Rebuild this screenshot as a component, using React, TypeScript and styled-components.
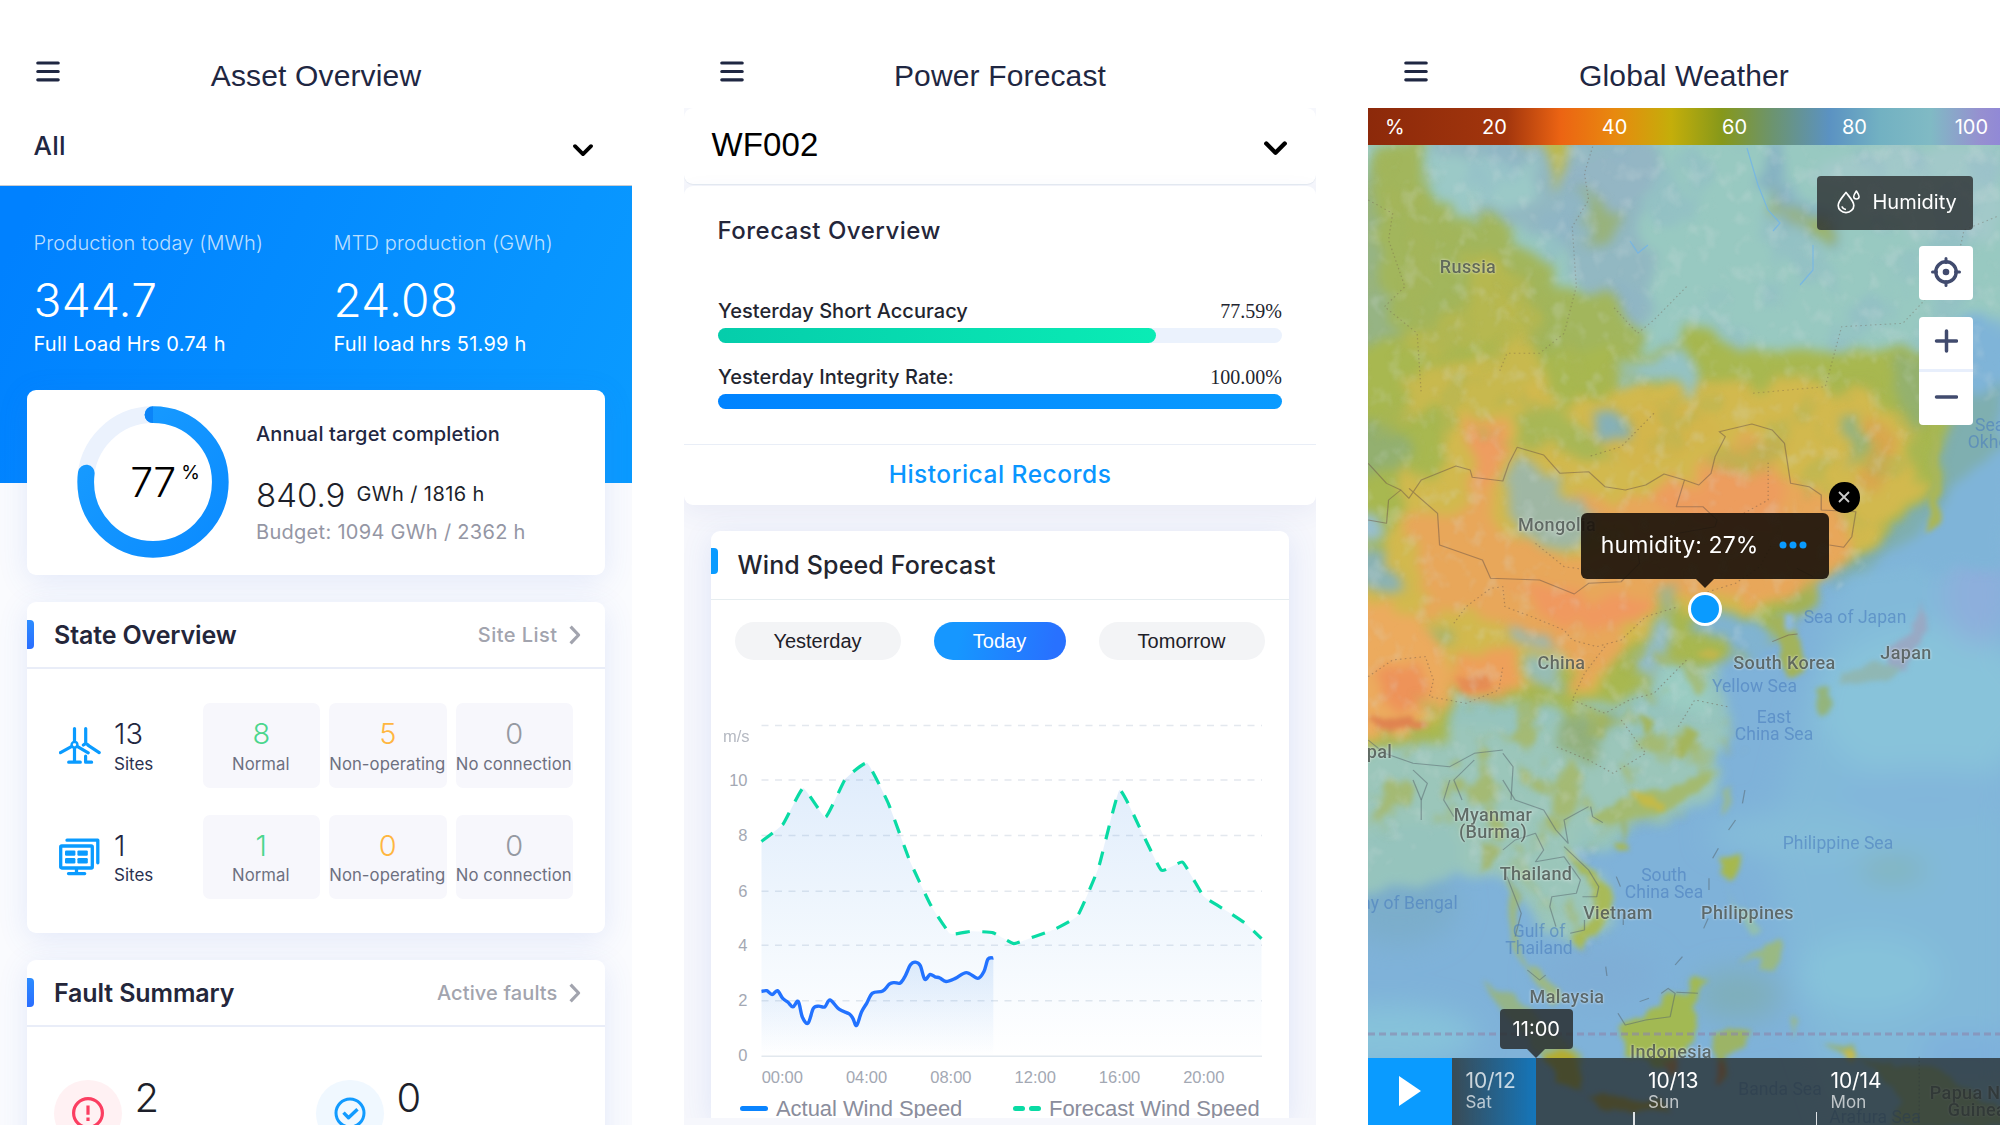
import React from 'react';
import styled, { createGlobalStyle } from 'styled-components';

const ui = `Inter, "Noto Sans", sans-serif`;
const helvetica = `"Liberation Sans", Arial, sans-serif`;

const GlobalStyle = createGlobalStyle`
  *, *::before, *::after { box-sizing: border-box; }
  body { margin: 0; background: #fff; font-family: ${ui}; overflow: hidden; }
  svg { display: block; flex: none; }
`;

/* ---------- shared ---------- */

const Page = styled.main`
  display: flex;
  gap: 52px;
  width: 2000px;
  height: 1125px;
  background: #fff;
`;

const Phone = styled.section`
  flex: none;
  display: flex;
  flex-direction: column;
  width: 632px;
  height: 1125px;
  overflow: hidden;
`;

const TopBar = styled.header`
  flex: none;
  display: grid;
  grid-template-columns: 60px 1fr 60px;
  height: 108px;
  padding: 58px 36px 0;
  background: #fff;
`;

const MenuIcon = styled.svg`
  margin-top: 2.5px;
`;

const TopTitle = styled.h1`
  margin: 0;
  font: 400 30px/36px ${helvetica};
  letter-spacing: 0.15px;
  text-align: center;
  color: #1f2742;
`;

const Header = ({ title }: { title: string }) => (
  <TopBar>
    <MenuIcon width="24" height="21" viewBox="0 0 24 21" stroke="#1f2742" strokeWidth="3.2" strokeLinecap="round">
      <path d="M1.8 2h20.4M1.8 10.5h20.4M1.8 18.8h20.4" />
    </MenuIcon>
    <TopTitle>{title}</TopTitle>
  </TopBar>
);

const DownChevron = ({ size = 20 }: { size?: number }) => (
  <svg width={size} height={size * 0.62} viewBox="0 0 20 12.4" fill="none" stroke="#000" strokeWidth="3.8" strokeLinecap="round" strokeLinejoin="round">
    <path d="M2 2.2l8 8 8-8" />
  </svg>
);

const Card = styled.article<{ $height?: number }>`
  flex: none;
  margin: 0 27px;
  ${(p) => (p.$height ? `height: ${p.$height}px;` : '')}
  border-radius: 9px;
  background: #fff;
  box-shadow: 0 6px 30px rgba(70, 110, 215, 0.13);
`;

/* ---------- asset overview ---------- */

const AssetBody = styled.div`
  flex: 1;
  display: flex;
  flex-direction: column;
  background: #fafbfe;
`;

const ScopeSelect = styled.div`
  flex: none;
  display: flex;
  align-items: center;
  justify-content: space-between;
  height: 77.5px;
  padding: 0 39px 1px 33.5px;
  border-bottom: 1px solid #c9ccd2;
  background: #fff;
  font-size: 26px;
  font-weight: 450;
  letter-spacing: 0.2px;
  color: #1f2742;

  svg { margin-top: 8px; }
`;

const Hero = styled.div`
  flex: none;
  display: grid;
  grid-template-columns: 300px 1fr;
  align-content: start;
  height: 297px;
  padding: 44px 33.5px 0;
  background: linear-gradient(115deg, #0081ff 5%, #0a9aff 95%);
  color: #fff;
`;

const HeroLabel = styled.div`
  font-size: 20px;
  font-weight: 320;
  line-height: 26px;
  letter-spacing: 0.15px;
  color: rgba(255, 255, 255, 0.74);
`;

const HeroValue = styled.div`
  margin-top: 16px;
  font-size: 46px;
  font-weight: 360;
  line-height: 56px;
  letter-spacing: 0.3px;
`;

const HeroNote = styled.div`
  margin-top: 3px;
  font-size: 20px;
  line-height: 26px;
  font-weight: 370;
  letter-spacing: 0.24px;
`;

const TargetCard = styled(Card)`
  display: flex;
  margin-top: -93px;
  padding: 16.5px 0 0 50px;
`;

const Ring = styled.div`
  position: relative;
  width: 152px;
  height: 152px;
`;

const RingValue = styled.div`
  position: absolute;
  inset: 0;
  display: flex;
  align-items: center;
  justify-content: center;
  gap: 6px;
  padding-left: 23.5px;
  font-size: 41px;
  font-weight: 320;
  letter-spacing: -0.8px;
  color: #000;

  sup {
    font-size: 19px;
    font-weight: 400;
    line-height: 20px;
    transform: translateY(-9.5px);
  }
`;

const TargetText = styled.div`
  margin: 14.5px 0 0 27px;
`;

const TargetTitle = styled.div`
  font-size: 20px;
  font-weight: 500;
  line-height: 26px;
  letter-spacing: 0.15px;
  color: #1f2742;
`;

const TargetValue = styled.div`
  display: flex;
  align-items: center;
  gap: 11px;
  height: 40px;
  margin-top: 28.5px;
  font-size: 33px;
  font-weight: 320;
  color: #1d1f2a;

  span {
    font-size: 20px;
    font-weight: 440;
    letter-spacing: 0.42px;
    transform: translateY(-1.5px);
  }
`;

const TargetBudget = styled.div`
  margin-top: 3.5px;
  font-size: 20px;
  font-weight: 370;
  line-height: 26px;
  letter-spacing: 0.3px;
  color: #9496a4;
`;

const CardHead = styled.header`
  display: flex;
  align-items: center;
  height: 67px;
  padding-right: 24px;
  border-bottom: 2px solid #e9edf8;
`;

const Accent = styled.i`
  width: 7px;
  height: 28.5px;
  border-radius: 0 4px 4px 0;
  background: linear-gradient(#2c8cff, #2a6dff);
`;

const CardTitle = styled.h2`
  margin: 0 auto 0 20px;
  font-size: 25px;
  font-weight: 620;
  letter-spacing: -0.12px;
  color: #24263a;
`;

const CardLink = styled.a<{ $spacing?: number }>`
  margin-right: 11.5px;
  font-size: 20px;
  font-weight: 450;
  letter-spacing: ${(p) => p.$spacing ?? 0}px;
  color: #a2a4ae;
`;

const RightChevron = () => (
  <svg width="12" height="20" viewBox="0 0 12 20" fill="none" stroke="#a2a4ae" strokeWidth="3.2" strokeLinejoin="round">
    <path d="M1.6 1.6L9.6 10l-8 8.4" />
  </svg>
);

const StateCard = styled(Card)`
  margin-top: 27px;
`;

const StateRow = styled.div`
  display: grid;
  grid-template-columns: 55px 88.5px 370.5px;
  align-items: center;
  height: 84.5px;
  padding-left: 32px;
  margin-top: 27px;

  &:nth-child(2) { margin-top: 34px; }
`;

const Stat = styled.div<{ $tone?: string; $tile?: boolean }>`
  height: 84.5px;
  padding-top: 14px;
  border-radius: 7px;
  background: ${(p) => (p.$tile ? '#f7f7fc' : 'none')};
  text-align: ${(p) => (p.$tile ? 'center' : 'left')};
  white-space: nowrap;

  strong {
    display: block;
    font-size: 29px;
    font-weight: 330;
    line-height: 34px;
    color: ${(p) => p.$tone ?? '#1f2742'};
  }
  span {
    display: block;
    margin: 2.5px -4px 0 ${(p) => (p.$tile ? '-5px' : '0')};
    font-size: ${(p) => (p.$tile ? 16.7 : 17)}px;
    font-weight: ${(p) => (p.$tile ? 370 : 400)};
    line-height: 20px;
    letter-spacing: ${(p) => (p.$tile ? 0.05 : 0)}px;
    color: ${(p) => (p.$tile ? '#6d7080' : '#2a3150')};
  }
`;

const Tiles = styled.div`
  display: grid;
  grid-template-columns: repeat(3, 117.5px);
  gap: 9px;
`;

const WindIcon = () => (
  <svg width="42" height="37" viewBox="0 0 42 37" fill="none" stroke="#0a9bff" strokeWidth="3.2" strokeLinecap="round" strokeLinejoin="round">
    <path d="M15.5 1.6v13M26.7 1.6v14M15.5 21v13.5M9.7 35.2h11.6M12.8 19.3L1.5 25.6M18.2 19.3l11 6.5M24.4 18l2.3-1.6 2.6 1.6M29.2 18.4l11 7.2M26.6 29.2v6h6" />
    <circle cx="15.5" cy="17.8" r="2.9" strokeWidth="2.4" />
  </svg>
);

const SolarIcon = () => (
  <svg width="42" height="38" viewBox="0 0 42 38" fill="none" stroke="#0a9bff" strokeWidth="3.3" strokeLinecap="round" strokeLinejoin="round">
    <path d="M8 2.2h30.8v22.6" />
    <rect x="1.7" y="8" width="31.6" height="22" rx="1" />
    <path d="M17.5 31v4.6M9.5 35.6h16.2" />
    <g fill="#0a9bff" stroke="none">
      <rect x="6" y="12.4" width="10.4" height="5.4" rx="1.2" />
      <rect x="18.4" y="12.4" width="10.4" height="5.4" rx="1.2" />
      <rect x="6" y="20" width="10.4" height="5.4" rx="1.2" />
      <rect x="18.4" y="20" width="10.4" height="5.4" rx="1.2" />
    </g>
  </svg>
);

const FaultRow = styled.div`
  display: grid;
  grid-template-columns: 262px 262px;
  padding: 47px 0 0 27px;
`;

const Fault = styled.div`
  display: flex;
  gap: 13px;
  font-size: 40px;
  font-weight: 320;
  line-height: 48px;
  color: #1d1f2a;
`;

const FaultBadge = styled.div<{ $bg: string }>`
  display: grid;
  place-items: center;
  width: 67.5px;
  height: 67.5px;
  margin-top: 5.5px;
  border-radius: 50%;
  background: ${(p) => p.$bg};
`;

const siteStates = [
  { icon: <WindIcon />, total: 13, counts: [8, 5, 0] },
  { icon: <SolarIcon />, total: 1, counts: [1, 0, 0] },
];
const stateKinds = [
  { label: 'Normal', tone: '#4bd68d' },
  { label: 'Non-operating', tone: '#ffb640' },
  { label: 'No connection', tone: '#9599a2' },
];

const AssetOverview = () => {
  const length = 2 * Math.PI * 67.3;
  return (
    <Phone>
      <Header title="Asset Overview" />
      <AssetBody>
        <ScopeSelect>
          All
          <DownChevron />
        </ScopeSelect>
        <Hero>
          <div>
            <HeroLabel>Production today (MWh)</HeroLabel>
            <HeroValue>344.7</HeroValue>
            <HeroNote>Full Load Hrs 0.74 h</HeroNote>
          </div>
          <div>
            <HeroLabel>MTD production (GWh)</HeroLabel>
            <HeroValue>24.08</HeroValue>
            <HeroNote>Full load hrs 51.99 h</HeroNote>
          </div>
        </Hero>
        <TargetCard $height={185.5}>
          <Ring>
            <svg width="152" height="152" viewBox="0 0 152 152" fill="none" strokeWidth="16.7">
              <defs>
                <linearGradient id="ring" x1="0" y1="1" x2="1" y2="0">
                  <stop offset="0" stopColor="#0b8bff" />
                  <stop offset="1" stopColor="#199dff" />
                </linearGradient>
              </defs>
              <circle cx="76" cy="76" r="67.3" stroke="#ebf2fd" />
              <circle
                cx="76" cy="76" r="67.3" stroke="url(#ring)" strokeLinecap="round"
                strokeDasharray={`${length * 0.77} ${length}`} transform="rotate(-90 76 76)"
              />
              <path d="M76 .4a8.3 8.3 0 0 0 0 16.7z" fill="#0b84f8" />
            </svg>
            <RingValue>77<sup>%</sup></RingValue>
          </Ring>
          <TargetText>
            <TargetTitle>Annual target completion</TargetTitle>
            <TargetValue>840.9 <span>GWh / 1816 h</span></TargetValue>
            <TargetBudget>Budget: 1094 GWh / 2362 h</TargetBudget>
          </TargetText>
        </TargetCard>
        <StateCard $height={331}>
          <CardHead>
            <Accent />
            <CardTitle>State Overview</CardTitle>
            <CardLink $spacing={0.45}>Site List</CardLink>
            <RightChevron />
          </CardHead>
          {siteStates.map((site, i) => (
            <StateRow key={i}>
              {site.icon}
              <Stat><strong>{site.total}</strong><span>Sites</span></Stat>
              <Tiles>
                {stateKinds.map((kind, k) => (
                  <Stat $tile $tone={kind.tone} key={kind.label}>
                    <strong>{site.counts[k]}</strong>
                    <span>{kind.label}</span>
                  </Stat>
                ))}
              </Tiles>
            </StateRow>
          ))}
        </StateCard>
        <StateCard $height={300}>
          <CardHead>
            <Accent />
            <CardTitle>Fault Summary</CardTitle>
            <CardLink $spacing={0.12}>Active faults</CardLink>
            <RightChevron />
          </CardHead>
          <FaultRow>
            <Fault>
              <FaultBadge $bg="#fff1f3">
                <svg width="34" height="34" viewBox="0 0 34 34" fill="none" stroke="#fb3e61" strokeWidth="3.2">
                  <circle cx="17" cy="17" r="14.4" />
                  <path d="M17 9.4v9.4M17 21.6v3.4" />
                </svg>
              </FaultBadge>
              2
            </Fault>
            <Fault>
              <FaultBadge $bg="#f0f8ff">
                <svg width="34" height="34" viewBox="0 0 34 34" fill="none" stroke="#129bff" strokeWidth="3">
                  <circle cx="17" cy="17" r="14" />
                  <path d="M10.5 16.6l5 5.2 9-8.6" strokeLinejoin="round" strokeWidth="3.4" />
                </svg>
              </FaultBadge>
              0
            </Fault>
          </FaultRow>
        </StateCard>
      </AssetBody>
    </Phone>
  );
};

/* ---------- power forecast ---------- */

const ForecastBody = styled.div`
  flex: 1;
  display: flex;
  flex-direction: column;
  background: #f6f7fc;
`;

const FarmSelect = styled.div`
  flex: none;
  display: flex;
  align-items: center;
  justify-content: space-between;
  height: 76px;
  padding: 0 29px 2px 27.5px;
  border-radius: 9px;
  background: #fff;
  box-shadow: 0 1px 1px #e3e8f0;
  font: 400 33px ${helvetica};
  letter-spacing: 0.1px;
  color: #000;

  svg { margin-top: 7px; }
`;

const OverviewCard = styled.article`
  flex: none;
  height: 318.5px;
  margin-top: 2px;
  padding-top: 30px;
  border-radius: 9px;
  background: #fff;
  box-shadow: 0 8px 24px rgba(70, 80, 170, 0.07);
`;

const OverviewTitle = styled.h2`
  margin: 0 33.5px 31.5px;
  font-size: 24px;
  font-weight: 500;
  line-height: 30px;
  letter-spacing: 0.5px;
  color: #24263a;
`;

const Meter = styled.div`
  padding: 20.8px 34px 0;
`;

const MeterText = styled.div`
  display: flex;
  justify-content: space-between;
  font-size: 20px;
  font-weight: 450;
  line-height: 26px;
  letter-spacing: 0.05px;
  color: #23252f;

  span {
    font: 400 20px/26px "Liberation Serif", serif;
    letter-spacing: 0;
  }
`;

const Track = styled.div`
  height: 15px;
  margin-top: 4px;
  border-radius: 8px;
  background: #ebf2fd;
`;

const Fill = styled.div<{ $colors: string }>`
  height: 100%;
  border-radius: 8px;
  background: linear-gradient(90deg, ${(p) => p.$colors});
`;

const HistoryLink = styled.a`
  display: block;
  height: 60px;
  margin-top: 34.5px;
  border-top: 1.5px solid #e9eef7;
  font-size: 24.5px;
  font-weight: 500;
  line-height: 58px;
  letter-spacing: 0.5px;
  text-align: center;
  color: #0a96ff;
`;

const WindCard = styled(Card)`
  margin-top: 26.5px;
  border-radius: 9px 9px 0 0;
  clip-path: inset(-40px -40px 0 -40px);
`;

const WindHead = styled.header`
  display: flex;
  align-items: center;
  height: 69px;
  border-bottom: 1.5px solid #e6edf0;

  i {
    width: 7px;
    height: 25.5px;
    margin-bottom: 8px;
    border-radius: 0 4px 4px 0;
    background: #0a9bff;
  }
  h2 {
    margin: 0 0 1px 19.5px;
    font-size: 25px;
    font-weight: 500;
    letter-spacing: 0.15px;
    color: #23252f;
  }
`;

const DayTabs = styled.div`
  display: flex;
  gap: 33px;
  padding: 22px 0 0 23.5px;
`;

const DayTab = styled.button<{ $active?: boolean }>`
  width: ${(p) => (p.$active ? 132 : 166)}px;
  height: 37.5px;
  padding: 1px 0 0;
  border: 0;
  border-radius: 19px;
  background: ${(p) => (p.$active ? 'linear-gradient(100deg, #1697ff 20%, #2871ff 90%)' : '#f3f4f6')};
  font: 400 20px ${helvetica};
  color: ${(p) => (p.$active ? '#fff' : '#1e2028')};
`;

const Legend = styled.div`
  display: flex;
  align-items: center;
  height: 26px;
  padding-left: 29px;
  font: 400 22px/26px ${helvetica};
  white-space: nowrap;
  color: #8a8d9c;

  svg { margin-right: 8px; }
  span { width: 237px; letter-spacing: -0.05px; }
`;

const AxisText = styled.text`
  font: 400 16.5px ${helvetica};
  fill: #a3a8b3;
`;

type Pt = [number, number];

/* Samples on a plot grid where 51.6 units are one hour and 71.6 units are 1 m/s. */
const forecast: Pt[] = [
  [0, 557], [53, 602], [102, 695], [157, 620], [205, 718], [259, 760], [311, 655], [362, 510], [413, 395],
  [462, 318], [515, 324], [568, 320], [618, 292], [668, 310], [720, 330], [775, 365], [826, 490], [877, 690],
  [930, 585], [980, 482], [1032, 503], [1083, 415], [1135, 380], [1185, 345], [1225, 305],
];
const actual: Pt[] = [
  [0, 168], [13, 170], [26, 160], [39, 170], [52, 150], [65, 140], [77, 128], [90, 142], [100, 102], [114, 86],
  [127, 124], [140, 130], [155, 128], [168, 146], [190, 122], [215, 110], [224, 98], [233, 80], [245, 115],
  [258, 138], [272, 164], [297, 169], [313, 187], [325, 191], [340, 190], [352, 208], [365, 237], [377, 244],
  [389, 235], [400, 200], [413, 212], [425, 206], [437, 203], [452, 194], [475, 202], [502, 217], [530, 202],
  [545, 220], [555, 252], [568, 255],
];
const toPlot = ([x, y]: Pt): Pt => [50.5 + x / 2.45, 396.3 - y / 2.592];

const curve = (data: Pt[], tension: number) => {
  const p = data.map(toPlot);
  return p.reduce((d, pt, i) => {
    if (i === 0) return `M${pt[0]} ${pt[1]}`;
    const a = p[i - 2] ?? p[i - 1];
    const b = p[i - 1];
    const n = p[i + 1] ?? pt;
    return `${d}C${b[0] + (pt[0] - a[0]) * tension} ${b[1] + (pt[1] - a[1]) * tension} ${pt[0] - (n[0] - b[0]) * tension} ${pt[1] - (n[1] - b[1]) * tension} ${pt[0]} ${pt[1]}`;
  }, '');
};
const area = (data: Pt[], tension: number) =>
  `${curve(data, tension)}L${toPlot(data[data.length - 1])[0]} 396.3L50.5 396.3Z`;

const rows = [
  { y: 65.6, text: '' }, { y: 120, text: '10' }, { y: 175.6, text: '8' }, { y: 231.2, text: '6' },
  { y: 285.2, text: '4' }, { y: 340.7, text: '2' },
];
const hours = ['00:00', '04:00', '08:00', '12:00', '16:00', '20:00'];

const WindChart = () => (
  <svg width="578" height="436" viewBox="0 0 578 436">
    <defs>
      <linearGradient id="forecastArea" gradientUnits="userSpaceOnUse" x1="0" y1="105" x2="0" y2="396">
        <stop offset="0" stopColor="#2a7fe8" stopOpacity=".15" />
        <stop offset="1" stopColor="#2a8fe8" stopOpacity="0" />
      </linearGradient>
      <linearGradient id="actualArea" gradientUnits="userSpaceOnUse" x1="0" y1="295" x2="0" y2="396">
        <stop offset="0" stopColor="#2a7fe8" stopOpacity=".14" />
        <stop offset="1" stopColor="#2a7fe8" stopOpacity="0" />
      </linearGradient>
    </defs>
    {rows.map((r) => (
      <g key={r.y}>
        <path d={`M50.5 ${r.y}H551`} stroke="#e3e8ee" strokeWidth="1.5" strokeDasharray="7 6.5" />
        <AxisText x="36.5" y={r.y + 5.5} textAnchor="end">{r.text}</AxisText>
      </g>
    ))}
    <path d="M50.5 396.3H551" stroke="#e2e8ee" strokeWidth="1.5" />
    <AxisText x="36.5" y="401" textAnchor="end">0</AxisText>
    <AxisText x="38.5" y="82" textAnchor="end" opacity=".8">m/s</AxisText>
    {hours.map((h, i) => (
      <AxisText key={h} x={71.3 + i * 84.3} y="423" textAnchor="middle">{h}</AxisText>
    ))}
    <path d={area(forecast, 0.06)} fill="url(#forecastArea)" />
    <path d={area(actual, 0.17)} fill="url(#actualArea)" />
    <path d={curve(forecast, 0.06)} fill="none" stroke="#09dba4" strokeWidth="3.2" strokeDasharray="14 12.6" />
    <path d={curve(actual, 0.17)} fill="none" stroke="#2272ff" strokeWidth="3.4" strokeLinejoin="round" />
  </svg>
);

const PowerForecast = () => (
  <Phone>
    <Header title="Power Forecast" />
    <ForecastBody>
      <FarmSelect>
        WF002
        <DownChevron size={23} />
      </FarmSelect>
      <OverviewCard>
        <OverviewTitle>Forecast Overview</OverviewTitle>
        <Meter>
          <MeterText>Yesterday Short Accuracy<span>77.59%</span></MeterText>
          <Track><Fill $colors="#05cdab, #0aecb5" style={{ width: '77.59%' }} /></Track>
        </Meter>
        <Meter>
          <MeterText>Yesterday Integrity Rate:<span>100.00%</span></MeterText>
          <Track><Fill $colors="#0083ff, #0a9bff" style={{ width: '100%' }} /></Track>
        </Meter>
        <HistoryLink>Historical Records</HistoryLink>
      </OverviewCard>
      <WindCard $height={587}>
        <WindHead>
          <i />
          <h2>Wind Speed Forecast</h2>
        </WindHead>
        <DayTabs>
          <DayTab>Yesterday</DayTab>
          <DayTab $active>Today</DayTab>
          <DayTab>Tomorrow</DayTab>
        </DayTabs>
        <WindChart />
        <Legend>
          <svg width="28" height="5" viewBox="0 0 28 5"><rect width="28" height="5" rx="2.5" fill="#0a84ff" /></svg>
          <span>Actual Wind Speed</span>
          <svg width="28" height="5" viewBox="0 0 28 5" fill="#09dba4">
            <rect width="12" height="5" rx="2.5" /><rect x="16" width="12" height="5" rx="2.5" />
          </svg>
          <span>Forecast Wind Speed</span>
        </Legend>
      </WindCard>
    </ForecastBody>
  </Phone>
);

/* ---------- global weather ---------- */

const ScaleBar = styled.div`
  flex: none;
  display: grid;
  grid-template-columns: 66.5px repeat(4, 120px) 85.5px;
  align-items: center;
  justify-items: center;
  height: 37px;
  background: linear-gradient(90deg, #8c290a 0, #a3360d 22%, #ec6413 30.5%, #e8890f 39%, #c4ae0a 48%, #86981a 56%,
    #6c946f 64%, #5b92c2 73%, #72b1c2 81%, #80bac4 89%, #968fd0 97%, #9189d6 100%);
  font-size: 20px;
  color: #fff;

  span:first-child { justify-self: start; margin-left: 17px; }
  span:last-child { justify-self: end; margin-right: 12px; }
`;

const MapArea = styled.div`
  position: relative;
  flex: 1;
  overflow: hidden;
`;

const MapSvg = styled.svg`
  position: absolute;
  inset: 0;
`;

const Place = styled.div<{ $x: number; $y: number; $sea?: boolean }>`
  position: absolute;
  left: ${(p) => p.$x}px;
  top: ${(p) => p.$y - (p.$sea ? 0 : 1)}px;
  transform: translate(-50%, -50%);
  font: ${(p) => (p.$sea ? 400 : 500)} ${(p) => (p.$sea ? 17.5 : 18)}px/17px Roboto, sans-serif;
  letter-spacing: ${(p) => (p.$sea ? 0.05 : 0.35)}px;
  white-space: pre;
  text-align: center;
  color: ${(p) => (p.$sea ? 'rgba(74, 125, 190, .6)' : 'rgba(58, 66, 62, .74)')};
  text-shadow: ${(p) => (p.$sea ? 'none' : '0 0 3px rgba(255,255,255,.5), 0 0 2px rgba(255,255,255,.4)')};
`;

const LayerButton = styled.button`
  position: absolute;
  top: 30.5px;
  right: 27px;
  display: flex;
  align-items: center;
  gap: 12.5px;
  width: 156px;
  height: 54px;
  padding: 0 0 1px 20px;
  border: 0;
  border-radius: 4px;
  background: rgba(42, 46, 48, 0.8);
  font: 430 20px ${ui};
  color: #fff;
`;

const ToolStack = styled.div`
  position: absolute;
  top: 101px;
  right: 27px;
  display: flex;
  flex-direction: column;
  gap: 17px;
`;

const ToolGroup = styled.div`
  display: grid;
  width: 54px;
  border-radius: 4px;
  background: #fff;
  overflow: hidden;
`;

const Tool = styled.button`
  display: grid;
  place-items: center;
  height: 54px;
  padding: 0 0 3px;
  border: 0;
  background: none;

  &:first-child:not(:last-child) { height: 51.5px; }
  & + & { height: 56.5px; border-top: 3px solid #e8effc; }
`;

const Popup = styled.div`
  position: absolute;
  left: 212.8px;
  top: 367.7px;
  display: flex;
  align-items: center;
  gap: 20.5px;
  width: 248px;
  height: 66px;
  padding: 0 0 2px 20px;
  border-radius: 6px;
  background: rgba(26, 18, 10, 0.9);
  font-size: 23px;
  font-weight: 370;
  letter-spacing: 0.12px;
  color: #fff;

  &::after {
    content: '';
    position: absolute;
    top: 66px;
    left: 115px;
    border: 9px solid transparent;
    border-top-color: rgba(26, 18, 10, 0.9);
    border-bottom: 0;
  }
`;

const ClosePin = styled.button`
  position: absolute;
  left: 461px;
  top: 337px;
  display: grid;
  place-items: center;
  width: 30.5px;
  height: 30.5px;
  padding: 0;
  border: 0;
  border-radius: 50%;
  background: #000;
`;

const Marker = styled.div`
  position: absolute;
  left: 320px;
  top: 447px;
  width: 34px;
  height: 34px;
  border: 3.5px solid #fff;
  border-radius: 50%;
  background: #0a9bff;
`;

const TimeTip = styled.div`
  position: absolute;
  left: 131.5px;
  top: 864px;
  width: 73.5px;
  height: 40px;
  border-radius: 4px;
  background: rgba(42, 48, 50, 0.86);
  font-size: 20px;
  line-height: 40px;
  text-align: center;
  color: #fff;

  &::after {
    content: '';
    position: absolute;
    top: 40px;
    left: 27.5px;
    border: 9px solid transparent;
    border-top-color: rgba(42, 48, 50, 0.86);
    border-bottom: 0;
  }
`;

const Timeline = styled.div`
  position: absolute;
  left: 0;
  right: 0;
  bottom: 0;
  display: flex;
  height: 67.5px;
  background: rgba(36, 42, 44, 0.76);
`;

const PlayButton = styled.button`
  display: grid;
  place-items: center;
  width: 84px;
  padding: 0;
  border: 0;
  background: #0a9bff;
`;

const Day = styled.div<{ $width: number; $current?: boolean }>`
  flex: none;
  width: ${(p) => p.$width}px;
  padding: 11.5px 0 0 13.5px;
  background: ${(p) => (p.$current ? 'linear-gradient(90deg, rgba(10,130,215,0), rgba(10,130,215,.78))' : 'none')};
  font-size: 21px;
  font-weight: 370;
  line-height: 24px;
  letter-spacing: -0.1px;
  color: ${(p) => (p.$current ? 'rgba(255,255,255,.75)' : '#fff')};

  small {
    display: block;
    margin-top: -2px;
    font-size: 17px;
    line-height: 22px;
    letter-spacing: 0.1px;
    color: rgba(255, 255, 255, 0.68);
  }
`;

const Tick = styled.i`
  align-self: flex-end;
  width: 1.5px;
  height: 13.5px;
  margin-left: auto;
  background: #dfe3e6;
`;

const Spacer = styled.div<{ $width: number }>`
  flex: none;
  display: flex;
  width: ${(p) => p.$width}px;
`;

const places: { t: string; x: number; y: number; sea?: boolean }[] = [
  { t: 'Russia', x: 100, y: 122 }, { t: 'Mongolia', x: 189, y: 380 }, { t: 'China', x: 193.5, y: 518 },
  { t: 'South Korea', x: 416.5, y: 518 }, { t: 'Japan', x: 538, y: 508 }, { t: 'Nepal', x: 0, y: 606.5 },
  { t: 'Myanmar\n(Burma)', x: 125, y: 679 }, { t: 'Thailand', x: 168, y: 729 }, { t: 'Vietnam', x: 250, y: 768 },
  { t: 'Philippines', x: 379.5, y: 768 }, { t: 'Malaysia', x: 199, y: 852 }, { t: 'Indonesia', x: 303, y: 907 },
  { t: 'Papua New\nGuinea', x: 609, y: 957 },
  { t: 'Sea of Japan', x: 487, y: 472, sea: true }, { t: 'Yellow Sea', x: 386.5, y: 541, sea: true },
  { t: 'East\nChina Sea', x: 406, y: 581, sea: true }, { t: 'Sea of\nOkhotsk', x: 632, y: 289, sea: true },
  { t: 'South\nChina Sea', x: 296, y: 739, sea: true }, { t: 'Philippine Sea', x: 470, y: 698, sea: true },
  { t: 'Bay of Bengal', x: 36, y: 758, sea: true }, { t: 'Gulf of\nThailand', x: 171, y: 795, sea: true },
  { t: 'Banda Sea', x: 412, y: 944, sea: true }, { t: 'Arafura Sea', x: 507, y: 972, sea: true },
];

/* Humidity field: each layer is a list of outlines in sheet units, painted from damp to dry. */
const sheet = {
  north: 'translate(-8 -145) scale(.40816 .33333)',
  middle: 'translate(-8 255) scale(.40816 .33333)',
  south: 'translate(-8 635) scale(.40816 .33333)',
};

const HumidityMap = () => (
  <MapSvg width="632" height="980" viewBox="0 0 632 980">
    <defs>
      <filter id="field" x="-10%" y="-10%" width="120%" height="120%" colorInterpolationFilters="sRGB">
        <feTurbulence type="fractalNoise" baseFrequency=".024" numOctaves="4" seed="8" result="n" />
        <feDisplacementMap in="SourceGraphic" in2="n" scale="44" xChannelSelector="R" yChannelSelector="G" />
        <feGaussianBlur stdDeviation="5.5" />
      </filter>
      <filter id="fieldFine" x="-10%" y="-10%" width="120%" height="120%" colorInterpolationFilters="sRGB">
        <feTurbulence type="fractalNoise" baseFrequency=".05" numOctaves="3" seed="3" result="n" />
        <feDisplacementMap in="SourceGraphic" in2="n" scale="14" xChannelSelector="R" yChannelSelector="G" />
        <feGaussianBlur stdDeviation="2.4" />
      </filter>
      <filter id="relief" x="0" y="0" width="100%" height="100%" colorInterpolationFilters="sRGB">
        <feTurbulence type="fractalNoise" baseFrequency=".06 .05" numOctaves="4" seed="21" />
        <feColorMatrix values="0 0 0 0 .84  0 0 0 0 .88  0 0 0 0 .88  4 0 0 0 -2.1" result="l" />
        <feComposite in="l" in2="SourceGraphic" operator="in" />
        <feGaussianBlur stdDeviation=".8" />
      </filter>
      <filter id="mottle" x="-5%" y="-5%" width="110%" height="110%" colorInterpolationFilters="sRGB">
        <feTurbulence type="fractalNoise" baseFrequency=".028 .024" numOctaves="3" seed="14" />
        <feColorMatrix values="0 0 0 0 .66  0 0 0 0 .71  0 0 0 0 .34  0 7 0 0 -3.7" result="l" />
        <feGaussianBlur in="SourceGraphic" stdDeviation="8" result="m" />
        <feComposite in="l" in2="m" operator="in" />
        <feGaussianBlur stdDeviation="2.5" />
      </filter>
      <filter id="mist" x="-5%" y="-5%" width="110%" height="110%" colorInterpolationFilters="sRGB">
        <feTurbulence type="fractalNoise" baseFrequency=".018 .014" numOctaves="3" seed="33" />
        <feColorMatrix values="0 0 0 0 .54  0 0 0 0 .69  0 0 0 0 .80  0 6 0 0 -3" result="l" />
        <feGaussianBlur in="SourceGraphic" stdDeviation="8" result="m" />
        <feComposite in="l" in2="m" operator="in" />
        <feGaussianBlur stdDeviation="3" />
      </filter>
      <filter id="soft"><feGaussianBlur stdDeviation="14" /></filter>
    </defs>

    <rect width="632" height="980" fill="#7fb2d9" />
    <g filter="url(#soft)">
      <path d="M480 400L640 330V980H470L430 860L400 700Z" fill="#82b9d9" />
      <ellipse cx="560" cy="560" rx="110" ry="80" fill="#88c3da" />
      <ellipse cx="500" cy="830" rx="70" ry="40" fill="#86c2da" />
      <ellipse cx="430" cy="690" rx="90" ry="22" fill="#85bdd9" />
      <ellipse cx="610" cy="450" rx="34" ry="50" fill="#8dafdc" />
      <ellipse cx="560" cy="650" rx="90" ry="26" fill="#82b6da" />
      <ellipse cx="20" cy="890" rx="90" ry="30" fill="#86c2da" />
      <ellipse cx="230" cy="830" rx="60" ry="30" fill="#7faed6" />
      <ellipse cx="370" cy="850" rx="44" ry="26" fill="#7fafbb" />
      <ellipse cx="600" cy="910" rx="50" ry="24" fill="#7eb0dc" />
      <ellipse cx="30" cy="760" rx="60" ry="40" fill="#7cadcb" />
      <ellipse cx="525" cy="725" rx="34" ry="10" fill="#83b3b0" />
    </g>

    <g filter="url(#field)">
      <g transform={sheet.north}>
        <path d="M-60 380H1640V960L1480 970L1370 1080L1300 1200H-60Z" fill="#98c9c1" />
        <path d="M160 380L600 380L720 420L700 640L720 900L660 960L540 880L480 700L300 660L220 640Z" fill="#92b8c2" />
        <path d="M190 470L400 480L450 600L300 640L210 660Z" fill="#9bc9c7" />
        <path d="M500 450L700 440L720 600L600 640L520 560Z" fill="#94b6c4" />
        <path d="M1130 450L1560 430V700L1400 720L1200 620L1100 500Z" fill="#a2c9c9" />
        <path d="M990 430L1030 430L1050 600L1180 660L1150 740L1040 680L980 560Z" fill="#86b2c2" />
        <path d="M1010 560L1040 620L1160 690L1140 720L1050 680L1005 620Z" fill="#9cb46a" />
      </g>
      <g transform={sheet.middle}>
        <path d="M1370 -170L1600 -260V500L1200 520L1180 440L1370 250Z" fill="#7fb4d8" />
        <path d="M1370 -60L1600 -40L1560 160L1450 280L1350 420L1180 560L1160 440Z" fill="#7fafb0" />
        <path d="M-60 960L240 880L500 880L720 720L880 790L920 960L840 1200L640 1330L-60 1500Z" fill="#96c4bd" />
      </g>
      <g transform={sheet.south}>
        <path d="M-60 -160L880 -160L850 20L700 110L560 130L500 230L610 330L620 420L540 500L430 420L360 300L290 290L220 130L90 130L-60 250Z" fill="#9bc6ba" />
      </g>
    </g>

    <path d="M60 0H632V250L540 290L500 300L300 250L150 90Z" fill="#fff" filter="url(#mist)" opacity=".3" />

    <g filter="url(#field)">
      <g transform={sheet.north}>
        <path d="M60 430L140 430L210 640L360 660L440 760L480 860L620 890L690 970L650 1060L610 1180L640 1300L-60 1300L-40 620Z" fill="#a2b65c" />
        <path d="M30 480L60 900L140 1100L10 1200L-60 700Z" fill="#96b484" />
        <path d="M420 400L500 390L490 560L450 490Z" fill="#bdb950" />
        <path d="M520 560L640 640L620 720L560 760Z" fill="#98b27c" />
        <path d="M820 980L890 970L930 1080L1000 1160L1300 1160L1330 1060L1400 1100L1400 1300L820 1300L800 1160Z" fill="#a6b74f" />
        <path d="M240 760L330 740L420 860L430 950L400 1100L160 1180L100 1060L260 900Z" fill="#b6b850" />
      </g>
      <g transform={sheet.middle}>
        <path d="M-60 -150L1390 -150L1440 60L1400 250L1260 430L1130 560L1060 640L1020 700L920 680L930 760L860 800L720 780L700 880L560 880L520 960L440 920L240 880L200 1060L-60 1040Z" fill="#a8b850" />
        <path d="M480 960L560 930L640 920L620 1000L540 1060L480 1040Z" fill="#92b07c" />
      </g>
    </g>

    <g filter="url(#field)">
      <g transform={sheet.middle}>
        <path d="M110 -60L420 -90L470 40L600 -20L700 -60L900 -40L1250 -30L1360 60L1360 260L1260 430L1130 540L1010 630L900 640L740 610L700 730L560 860L530 900L480 820L380 880L230 860L180 1020L-60 1020L-60 550L40 500L110 300L60 200L180 240L220 60Z" fill="#d2b94e" />
        <path d="M250 20L370 60L340 260L300 340L420 420L560 480L660 430L480 330L640 290L800 240L860 180L960 80L1060 260L1180 320L1180 520L1010 620L860 600L740 590L660 650L640 780L560 820L520 880L480 760L340 680L280 620L180 640L130 460L100 380L130 320L250 350Z" fill="#e8a75a" />
        <path d="M-40 600L160 620L200 720L220 900L150 1010L-40 1010Z" fill="#ecab5e" />
        <path d="M250 740L400 760L400 860L300 900L210 850Z" fill="#eea05a" />
        <path d="M1250 30L1330 100L1290 300L1210 260L1240 120Z" fill="#d9a84e" />
        <path d="M860 180L940 120L1040 140L1010 220L900 240Z" fill="#cfae50" />
        <path d="M320 540L480 560L700 600L680 690L520 660Z" fill="#f0995f" />
        <path d="M240 60L340 90L330 220L270 230Z" fill="#ee9d60" />
        <path d="M700 290L860 250L980 200L1040 300L1000 420L860 400Z" fill="#ed9d5e" />
        <path d="M40 800L140 800L150 920L40 940Z" fill="#ee9359" />
        <path d="M640 80L780 0L880 60L820 180L640 200L560 160Z" fill="#d3b64c" />
        <path d="M380 20L560 60L640 160L560 200L420 140Z" fill="#a9b856" />
      </g>
      <g transform={sheet.north}>
        <path d="M160 1080L300 1080L420 1000L440 1100L360 1240L100 1240Z" fill="#c8b94e" />
        <path d="M340 880L420 880L430 980L360 1010Z" fill="#bcb94e" />
      </g>
    </g>

    <g filter="url(#field)">
      <g transform={sheet.middle}>
        <path d="M390 170L470 200L500 300L580 340L540 440L440 430L380 380L370 260Z" fill="#9fb7a4" />
        <path d="M-60 310L50 330L70 400L20 440L-60 420Z" fill="#97bfcf" />
        <path d="M-60 440L60 480L120 560L70 590L-60 540Z" fill="#8ab2b4" />
        <path d="M590 20L640 30L640 110L600 110Z" fill="#85b0b8" />
        <path d="M1190 80L1230 20L1240 150L1200 190Z" fill="#8fb285" />
        <path d="M360 680L450 690L480 760L400 740Z" fill="#97b8b6" />
        <path d="M180 680L260 670L250 720L200 740Z" fill="#a9b46a" />
        <path d="M740 570L800 560L780 640L740 620Z" fill="#9fb292" />
        <path d="M720 660L770 640L760 760L700 880L680 840Z" fill="#93bcc6" />
        <path d="M420 780L480 800L500 900L440 880Z" fill="#96bcb4" />
        <path d="M840 640L920 640L1000 680L960 760L880 720L830 690Z" fill="#80b3d0" />
        <path d="M-60 60L80 40L120 120L80 240L-60 200Z" fill="#93b070" />
        <path d="M1060 560L1120 540L1080 640L1040 620Z" fill="#9fb257" />
        <path d="M760 800L860 830L850 920L760 930L720 860Z" fill="#9accc2" />
      </g>
      <g transform={sheet.north}>
        <path d="M620 1080L820 1060L800 1180L720 1130L640 1180Z" fill="#94c2c4" />
        <path d="M1300 1100L1400 1020L1420 1240L1350 1300Z" fill="#94b16e" />
      </g>
    </g>

    <path d="M0 560L90 560L190 540L280 500L330 520L370 590L340 660L230 680L200 720L240 780L215 800L140 710L95 680L0 680Z" fill="#fff" filter="url(#mottle)" opacity=".7" />
    <path d="M0 20H60L190 160L260 220L330 250L520 240L560 300L540 400L300 300L0 300Z" fill="#fff" filter="url(#mottle)" opacity=".35" />

    <g filter="url(#fieldFine)">
      <g transform={sheet.middle}>
        <path d="M1000 650L1040 640L1080 720L1090 810L1040 840L1030 760Z" fill="#a2b35c" />
        <path d="M1370 600L1390 680L1340 780L1340 820L1290 810L1300 740L1350 690Z" fill="#98a9c4" />
        <path d="M1250 790L1330 800L1290 840L1170 850L1180 820Z" fill="#8fb7b4" />
        <path d="M1115 870L1150 860L1150 940L1130 950Z" fill="#93b47c" />
        <path d="M790 980L830 1000L790 1080L770 1050Z" fill="#a4b55c" />
        <path d="M680 950L720 960L700 1010Z" fill="#a4b55c" />
        <path d="M1040 640L1060 640L1060 680L1040 690Z" fill="#8bb8dc" />
        <path d="M1400 60L1420 120L1420 380L1390 400L1400 200Z" fill="#a9b659" />
        <path d="M20 960L160 955L170 975L40 990Z" fill="#df8350" />
        <path d="M230 840L310 830L320 860L260 870Z" fill="#e58d54" />
        <path d="M850 740L890 760L860 780L820 770Z" fill="#c0b64c" />
      </g>
      <g transform={sheet.south}>
        <path d="M560 110L640 60L700 40L860 -20L840 30L740 100L640 120L590 130Z" fill="#a3ba70" />
        <path d="M660 40L750 70L740 95L680 70Z" fill="#c4ba48" />
        <path d="M620 200L650 190L660 215L635 225Z" fill="#a9b84e" />
        <path d="M640 120L655 120L650 180L640 180Z" fill="#9ab47a" />
        <path d="M500 190L530 240L600 300L620 400L590 430L560 480L530 510L520 470L580 400L570 320L520 260Z" fill="#a8ba58" />
        <path d="M300 190L350 200L330 250L290 290Z" fill="#a3b875" />
        <path d="M360 290L400 340L385 470L410 560L470 600L500 660L470 680L420 600L375 500Z" fill="#9cb885" />
        <path d="M300 605L370 640L440 720L540 820L550 900L500 920L440 820L340 680Z" fill="#95b488" />
        <path d="M625 740L650 720L700 720L760 630L800 640L820 590L850 600L820 680L825 740L790 830L760 860L660 840Z" fill="#a2b953" />
        <path d="M890 230L930 220L930 270L905 300L880 290Z" fill="#a6b84e" />
        <path d="M890 30L910 15L905 80L885 100Z" fill="#94b89c" />
        <path d="M1000 490L1030 490L1020 530L1020 580L980 570L985 530L930 550Z" fill="#99b983" />
        <path d="M890 300L910 350L960 420L990 440L960 470L920 380Z" fill="#92bfae" />
        <path d="M870 770L900 750L960 750L940 800L900 830L890 900L870 900Z" fill="#9cb466" />
        <path d="M1060 700L1080 730L1060 770Z" fill="#96b793" />
        <path d="M1130 790L1210 800L1220 840L1290 850L1400 860L1580 1000V1040H1300L1330 960L1250 860Z" fill="#95b27c" />
        <path d="M450 810L520 830L550 900L540 940L480 900Z" fill="#b5ad30" />
        <path d="M560 950L730 960L760 1000L680 1000L580 980Z" fill="#b5a030" />
        <path d="M740 840L790 850L770 890Z" fill="#d08a48" />
        <path d="M870 850L890 850L885 920L868 920Z" fill="#d07f48" />
        <path d="M1180 810L1210 820L1200 850Z" fill="#c9bb48" />
      </g>
    </g>

    <path d="M0 0H632V250L540 290L500 420L440 470L350 520L340 600L230 690L240 790L210 810L150 720L110 740L90 680L0 730Z" fill="#fff" filter="url(#relief)" opacity=".2" />

    <g fill="none" stroke="#70b4e8" strokeWidth="1.2" opacity=".8">
      <path d="M379 3L390 40L400 65L412 78L405 86M445 100V125L432 140M262 96L270 108L280 100" />
    </g>

    <g fill="none" stroke="#6d5648" strokeOpacity=".5" strokeLinejoin="round">
      <g transform={sheet.middle}>
        <g strokeWidth="3">
          <path d="M20 190L65 250L100 270L120 295L150 240L235 198L270 210L275 232L350 243L365 190L385 142L450 165L490 220L560 215L600 260L650 270L700 255L745 222L795 240L775 320L840 320L875 360L870 380L780 400L680 450L685 490L640 545L560 550L525 582L440 540L320 535L300 480L195 435L190 340L120 265" />
          <path d="M795 240L830 255L860 220L870 170L895 110L880 95L960 72L1010 90L1040 130L1055 250L1100 260L1130 285L1130 330L1215 335L1205 410L1185 442L1150 435M1070 505L1110 530M1010 725L1050 705L1072 702M20 360L65 370L70 300L100 270" />
          <path d="M20 1020L60 1060L130 1090L220 1100L280 1060L350 1050M130 1110L165 1150L150 1200M350 1060L375 1100L370 1200M280 1080L230 1140L250 1200" stroke="#56646c" />
        </g>
        <g strokeWidth="3" strokeDasharray="4 8" strokeOpacity=".45">
          <path d="M230 670L260 620L320 565L350 560L355 620L420 650L500 690L520 720L580 740L640 720L700 650L780 620M20 830L80 780L160 770L180 840L170 890L260 910L340 870L350 800M600 740L550 820L520 900L600 940L660 900L720 880L800 780M840 580L920 550L980 500L1010 430M430 430L500 500L560 510M720 40L640 140L560 170M940 340L1000 300L1000 180M780 980L820 900L900 920M640 960L700 1060L620 1120L560 1080L480 1040" />
        </g>
      </g>
      <g transform={sheet.south} strokeWidth="3" stroke="#56646c">
        <path d="M130 0L150 60L150 120M220 0L205 60L230 110M350 0L380 60L450 90L480 150L510 190L500 120L560 80M350 210L380 180L430 160L450 210L430 245L500 230L540 300L530 340L470 350L465 380L480 440M500 200L560 270L585 320L580 350L545 350M360 290L395 400L380 470M515 460L550 450L550 420M410 570L440 600L455 585M632 700L650 735L700 720L760 710L772 640L755 625L738 640M775 637L828 640M565 80L570 110L595 128" />
        <path d="M943 30L937 70M920 120L903 150M878 205L864 235M855 295V330M853 415L842 445M790 530L772 555M602 560L605 588M628 290L638 320M645 400V435M685 665L708 655" />
        <path d="M1370 830V1035" strokeDasharray="5 7" />
      </g>
      <g transform={sheet.north} strokeWidth="3" strokeDasharray="4 8" strokeOpacity=".35">
        <path d="M570 440L550 520L560 600L520 680L530 860L500 1000L440 1060L360 1060L340 1120M20 600L80 640L70 720L110 860L60 920L140 1000L150 1180M800 860L720 960L680 1000L620 920M1560 650L1480 690L1460 800L1330 970L1180 980L1140 1160L960 1180" />
      </g>
    </g>
    <path d="M0 889H632" stroke="#8d86ac" strokeWidth="3" strokeDasharray="7 4" opacity=".6" />
  </MapSvg>
);

const GlobalWeather = () => (
  <Phone>
    <Header title="Global Weather" />
    <ScaleBar>
      {['%', '20', '40', '60', '80', '100'].map((v) => <span key={v}>{v}</span>)}
    </ScaleBar>
    <MapArea>
      <HumidityMap />
      {places.map((p) => <Place key={p.t + p.x} $x={p.x} $y={p.y} $sea={p.sea}>{p.t}</Place>)}
      <LayerButton>
        <svg width="23" height="24" viewBox="0 0 23 24" fill="none" stroke="#fff" strokeWidth="1.7" strokeLinejoin="round">
          <path d="M9 2.4C6.6 6 1.2 11 1.2 15.4a7.8 7.2 0 0 0 15.6 0C16.8 11 11.4 6 9 2.4z" />
          <path d="M5 16.4c.5 1.9 1.9 2.9 4 3.1" />
          <path d="M19.4 1c-1 1.7-2.7 3.7-2.7 5.6a2.7 2.5 0 0 0 5.4 0c0-1.9-1.7-3.9-2.7-5.6z" strokeWidth="1.5" />
        </svg>
        Humidity
      </LayerButton>
      <ToolStack>
        <ToolGroup>
          <Tool>
            <svg width="30" height="30" viewBox="0 0 30 30" fill="none" stroke="#414b6e" strokeWidth="3.4">
              <circle cx="15" cy="15" r="10.2" />
              <path d="M15 1.5v4M15 24.5v4M1.5 15h4M24.5 15h4" strokeLinecap="round" strokeWidth="3" />
              <circle cx="15" cy="15" r="3.3" fill="#414b6e" stroke="none" />
            </svg>
          </Tool>
        </ToolGroup>
        <ToolGroup>
          <Tool>
            <svg width="24" height="24" viewBox="0 0 24 24" stroke="#414b6e" strokeWidth="3.5" strokeLinecap="round">
              <path d="M12.5 2v20M2.5 12h20" />
            </svg>
          </Tool>
          <Tool>
            <svg width="24" height="24" viewBox="0 0 24 24" stroke="#414b6e" strokeWidth="3.5" strokeLinecap="round">
              <path d="M2.5 12h20" />
            </svg>
          </Tool>
        </ToolGroup>
      </ToolStack>
      <Marker />
      <Popup>
        humidity: 27%
        <svg width="28" height="8" viewBox="0 0 28 8" fill="#0a9bff">
          <circle cx="4" cy="4" r="3.5" /><circle cx="14" cy="4" r="3.5" /><circle cx="24" cy="4" r="3.5" />
        </svg>
      </Popup>
      <ClosePin>
        <svg width="12" height="12" viewBox="0 0 12 12" stroke="#ccc" strokeWidth="1.8">
          <path d="M1 1l10 10M11 1L1 11" />
        </svg>
      </ClosePin>
      <Timeline>
        <PlayButton>
          <svg width="22" height="30" viewBox="0 0 22 30" fill="#fff"><path d="M0 0l22 15L0 30z" /></svg>
        </PlayButton>
        <Day $width={84} $current>10/12<small>Sat</small></Day>
        <Spacer $width={98.5}><Tick /></Spacer>
        <Day $width={100}>10/13<small>Sun</small></Day>
        <Spacer $width={82.5}><Tick /></Spacer>
        <Day $width={183}>10/14<small>Mon</small></Day>
      </Timeline>
      <TimeTip>11:00</TimeTip>
    </MapArea>
  </Phone>
);

export default function App() {
  return (
    <>
      <GlobalStyle />
      <Page>
        <AssetOverview />
        <PowerForecast />
        <GlobalWeather />
      </Page>
    </>
  );
}
